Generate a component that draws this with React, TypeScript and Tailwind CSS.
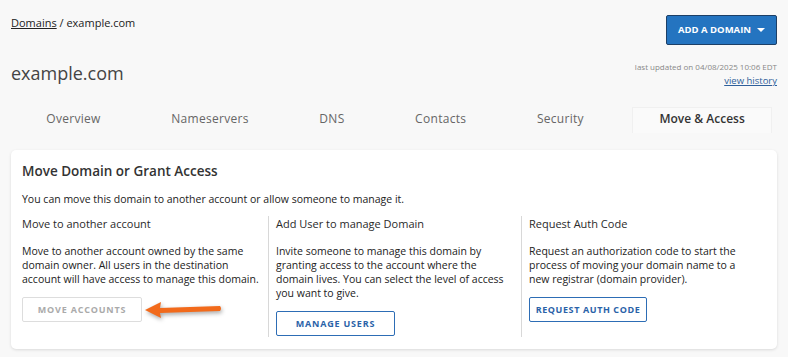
import React from "react";

const tabs = ["Overview", "Nameservers", "DNS", "Contacts", "Security", "Move & Access"];

export default function App() {
  return (
    <div
      className="w-[788px] h-[357px] bg-[#f8f8f8] text-[#333] overflow-hidden"
      style={{ fontFamily: '"Open Sans", "Noto Sans", sans-serif' }}
    >
      <div className="px-[11px]">
        <div className="flex justify-between items-start pt-[15px]">
          <div className="text-[11px] pt-[0px] leading-[16px] text-[#222]">
            <span className="underline">Domains</span> / example.com
          </div>
          <button className="h-[30px] w-[111px] bg-[#2474c0] border border-[#1d3f66] rounded-[2px] text-white text-[9.5px] font-bold flex items-center justify-center gap-[6px]">
            ADD A DOMAIN
            <svg width="8" height="4" viewBox="0 0 8 4">
              <path d="M0 0 L8 0 L4 4 Z" fill="#fff" />
            </svg>
          </button>
        </div>
        <div className="flex justify-between items-end mt-[15px]">
          <div className="text-[18px] leading-[24px] text-[#444] mb-[2px]">example.com</div>
          <div className="text-right leading-[13px]">
            <div className="text-[8px] text-[#888]">last updated on 04/08/2025 10:06 EDT</div>
            <div className="text-[9.5px] text-[#2f5f9a] underline mt-[1px]">view history</div>
          </div>
        </div>
        <div className="flex justify-around mt-[20px] h-[26px]">
          {tabs.map((t, i) =>
            i === tabs.length - 1 ? (
              <div
                key={t}
                className="-mx-[26px] translate-x-[4px] px-[26px] bg-[#fafafa] border border-b-0 border-[#f0f0f0] text-[12px] font-semibold text-[#333] flex items-center pb-[3px]"
              >
                {t}
              </div>
            ) : (
              <div key={t} className="text-[12px] text-[#666] tracking-[0.3px] flex items-center pb-[3px]">
                {t}
              </div>
            )
          )}
        </div>
        <div className="mt-[17px] bg-white rounded-[5px] shadow-[0_1px_3px_rgba(0,0,0,0.12)] px-[11px] pt-[11px] pb-[12px] relative">
          <div className="text-[13.5px] font-semibold text-[#333] leading-[20px]">Move Domain or Grant Access</div>
          <div className="text-[10.5px] mt-[10px] leading-[16px] text-[#222]">
            You can move this domain to another account or allow someone to manage it.
          </div>
          <div className="grid grid-cols-[246px_253px_1fr] mt-[9px]">
            <div className="pr-[6px]">
              <div className="text-[11px] leading-[16px] font-medium text-[#2a2a2a]">Move to another account</div>
              <p className="text-[10.5px] leading-[14px] mt-[12px] text-[#222]">
                Move to another account owned by the same domain owner. All users in the destination account will have access to manage this domain.
              </p>
              <button className="mt-[11px] h-[25px] w-[120px] border border-[#dddddd] rounded-[2px] text-[9px] font-bold tracking-[0.8px] text-[#aaaaaa]">
                MOVE ACCOUNTS
              </button>
            </div>
            <div className="border-l border-[#d8d8d8] pl-[7px] pr-[6px] pb-[1px]">
              <div className="text-[11px] leading-[16px] font-medium text-[#2a2a2a]">Add User to manage Domain</div>
              <p className="text-[10.5px] leading-[14px] mt-[12px] text-[#222]">
                Invite someone to manage this domain by granting access to the account where the domain lives. You can select the level of access you want to give.
              </p>
              <button className="mt-[11px] h-[25px] w-[119px] border border-[#2d6db5] rounded-[2px] text-[9px] font-bold tracking-[0.8px] text-[#2a62a8]">
                MANAGE USERS
              </button>
            </div>
            <div className="border-l border-[#d8d8d8] pl-[7px] pr-[22px]">
              <div className="text-[11px] leading-[16px] font-medium text-[#2a2a2a]">Request Auth Code</div>
              <p className="text-[10.5px] leading-[14px] mt-[12px] text-[#222]">
                Request an authorization code to start the process of moving your domain name to a new registrar (domain provider).
              </p>
              <button className="mt-[11px] h-[25px] w-[118px] border border-[#2d6db5] rounded-[2px] text-[9px] font-bold tracking-[0.6px] text-[#2a62a8]">
                REQUEST AUTH CODE
              </button>
            </div>
          </div>
          <svg
            className="absolute left-[131px] top-[147px]"
            width="84"
            height="26"
            viewBox="0 0 84 26"
            style={{ filter: "drop-shadow(1px 2px 2px rgba(0,0,0,0.35))" }}
          >
            <path d="M3 13 L19 5 L18 11 L78 9 Q80 11.5 78 14 L18 16 L19 21 Z" fill="#f26a1b" />
          </svg>
        </div>
      </div>
    </div>
  );
}
